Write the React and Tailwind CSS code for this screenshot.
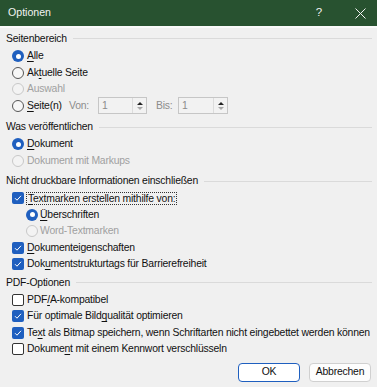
import React from "react";

const BLUE = "bg-[#1f5fbf]";

function Radio({ checked, disabled }) {
  if (checked) {
    return (
      <span className={`w-[12px] h-[12px] rounded-full ${BLUE} flex items-center justify-center shrink-0`}>
        <span className="w-[5px] h-[5px] rounded-full bg-white" />
      </span>
    );
  }
  return (
    <span
      className={`w-[12px] h-[12px] rounded-full border shrink-0 ${
        disabled ? "border-[#c8c8c8] bg-[#f3f3f3]" : "border-[#555] bg-[#f7f7f7]"
      }`}
    />
  );
}

function Check({ checked }) {
  if (checked) {
    return (
      <span className={`w-[12px] h-[12px] rounded-[2px] ${BLUE} flex items-center justify-center shrink-0`}>
        <svg width="8" height="8" viewBox="0 0 8 8" fill="none">
          <path d="M1 4.2 L3 6.2 L7 1.8" stroke="white" strokeWidth="1" />
        </svg>
      </span>
    );
  }
  return <span className="w-[12px] h-[12px] rounded-[2px] border border-[#333] bg-white shrink-0" />;
}

function Header({ children, className = "" }) {
  return (
    <div className={`h-[18px] flex items-center pl-[6px] pr-[5px] gap-[6px] ${className}`}>
      <span className="whitespace-nowrap">{children}</span>
      <span className="flex-1 h-px bg-[#dadada]" />
    </div>
  );
}

function Row({ children, indent = "pl-[12px]", gap = "gap-[3px]" }) {
  return <div className={`h-[16.5px] flex items-center ${indent} ${gap}`}>{children}</div>;
}

function Spin({ className = "" }) {
  return (
    <div className={`h-[17px] border border-[#c6c6c6] bg-[#f2f2f2] flex ${className}`}>
      <span className="flex-1 pl-[3px] text-[#8c8c8c] leading-[15px]">1</span>
      <div className="w-[14px] border-l border-[#dcdcdc] flex flex-col items-center justify-center gap-[2px]">
        <svg width="6" height="3" viewBox="0 0 6 3">
          <path d="M0 3 L3 0 L6 3 Z" fill="#222" />
        </svg>
        <svg width="6" height="3" viewBox="0 0 6 3">
          <path d="M0 0 L3 3 L6 0 Z" fill="#a8a8a8" />
        </svg>
      </div>
    </div>
  );
}

export default function App() {
  return (
    <div
      className="w-[377px] h-[387px] bg-[#f0f0f0] text-[10.4px] tracking-[-0.2px] text-[#111] flex flex-col overflow-hidden"
      style={{ fontFamily: '"Liberation Sans", Arial, sans-serif' }}
    >
      <div className="h-[26px] bg-[#285230] flex items-center pl-[8px] text-[#f2f2f2] text-[10.6px] tracking-normal">
        <span className="flex-1">Optionen</span>
        <span className="w-[20px] text-center mr-[26px] text-[11.5px]">?</span>
        <svg width="11" height="11" viewBox="0 0 11 11" className="mr-[11px]">
          <path d="M0.5 0.5 L10.5 10.5 M10.5 0.5 L0.5 10.5" stroke="#f2f2f2" strokeWidth="1" />
        </svg>
      </div>
      <div className="h-[2px] bg-[#fafafa]" />

      <Header className="mt-[1px] h-[19px]">Seitenbereich</Header>
      <Row>
        <Radio checked />
        <span><u className="underline-offset-2">A</u>lle</span>
      </Row>
      <Row>
        <Radio />
        <span>Ak<u className="underline-offset-2">t</u>uelle Seite</span>
      </Row>
      <Row>
        <Radio disabled />
        <span className="text-[#a0a0a0]">Auswahl</span>
      </Row>
      <Row>
        <Radio />
        <span className="w-[39px]"><u className="underline-offset-2">S</u>eite(n)</span>
        <span className="text-[#8c8c8c] w-[26px]">Von:</span>
        <Spin className="w-[49px]" />
        <span className="text-[#8c8c8c] ml-[6px] w-[19px]">Bis:</span>
        <Spin className="w-[50px]" />
      </Row>

      <Header className="mt-[4px]">Was veröffentlichen</Header>
      <Row>
        <Radio checked />
        <span><u className="underline-offset-2">D</u>okument</span>
      </Row>
      <Row>
        <Radio disabled />
        <span className="text-[#a0a0a0]">Dokument mit Markups</span>
      </Row>

      <Header className="mt-[3px]">Nicht druckbare Informationen einschließen</Header>
      <Row indent="pl-[12px]" gap="gap-[2px]">
        <Check checked />
        <span className="border border-dotted border-[#333] px-[1px] leading-[12px] h-[13px]">
          <u className="underline-offset-2">T</u>extmarken erstellen mithilfe von:
        </span>
      </Row>
      <Row indent="pl-[26px]" gap="gap-[2px]">
        <Radio checked />
        <span><u className="underline-offset-2">Ü</u>berschriften</span>
      </Row>
      <Row indent="pl-[26px]" gap="gap-[2px]">
        <Radio disabled />
        <span className="text-[#a0a0a0]">Word-Textmarken</span>
      </Row>
      <Row indent="pl-[12px]">
        <Check checked />
        <span><u className="underline-offset-2">D</u>okumenteigenschaften</span>
      </Row>
      <Row indent="pl-[12px]">
        <Check checked />
        <span>Dok<u className="underline-offset-2">u</u>mentstrukturtags für Barrierefreiheit</span>
      </Row>

      <Header className="mt-[1px]">PDF-Optionen</Header>
      <Row indent="pl-[12px]">
        <Check />
        <span>PDF<u className="underline-offset-2">/</u>A-kompatibel</span>
      </Row>
      <Row indent="pl-[12px]">
        <Check checked />
        <span>Für optimale Bild<u className="underline-offset-2">q</u>ualität optimieren</span>
      </Row>
      <Row indent="pl-[12px]">
        <Check checked />
        <span className="whitespace-nowrap">
          Te<u className="underline-offset-2">x</u>t als Bitmap speichern, wenn Schriftarten nicht eingebettet werden können
        </span>
      </Row>
      <Row indent="pl-[12px]">
        <Check />
        <span>Dokume<u className="underline-offset-2">n</u>t mit einem Kennwort verschlüsseln</span>
      </Row>

      <div className="mt-[5px] flex justify-end gap-[9px] pr-[6px]">
        <button className="w-[62px] h-[19px] rounded-[4px] border border-[#1f5fbf] bg-white leading-none">OK</button>
        <button className="w-[62px] h-[19px] rounded-[4px] border border-[#d0d0d0] bg-[#fdfdfd] leading-none">Abbrechen</button>
      </div>
    </div>
  );
}
